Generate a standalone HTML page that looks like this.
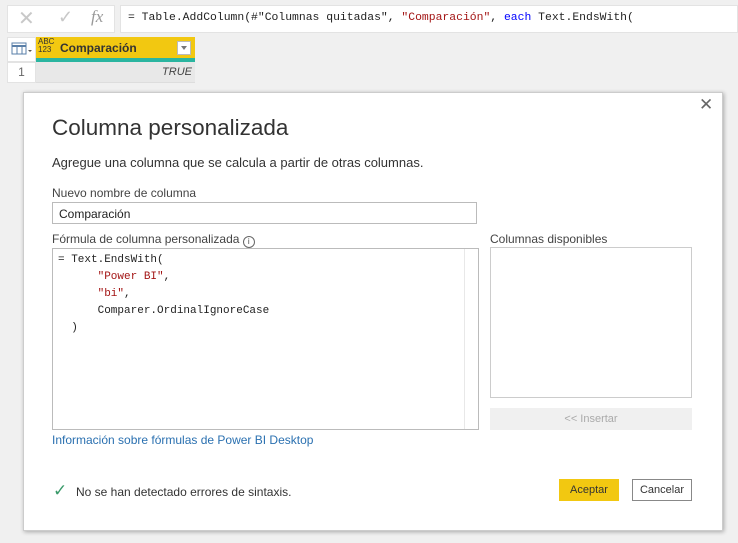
<!DOCTYPE html>
<html><head><meta charset="utf-8"><style>
*{margin:0;padding:0;box-sizing:border-box}
body{width:738px;height:543px;background:#f0f0f0;font-family:"Liberation Sans",sans-serif;position:relative;overflow:hidden;color:#333}
.a{position:absolute}
.mono{font-family:"Liberation Mono",monospace}
</style></head><body>
<div class="a" style="left:7px;top:5px;width:108px;height:28px;background:#fff;border:1px solid #e3e3e3"></div>
<div class="a" style="left:18px;top:6px;font-size:20px;color:#c8c8c8">✕</div>
<div class="a" style="left:58px;top:7px;font-size:18px;color:#c8c8c8">✓</div>
<div class="a" style="left:91px;top:7px;font-size:17px;color:#999;font-family:'Liberation Serif',serif;font-style:italic">fx</div>
<div class="a" style="left:120px;top:5px;width:618px;height:28px;background:#fff;border:1px solid #e3e3e3"></div>
<div class="a mono" style="left:128px;top:12px;font-size:11.4px;color:#222;white-space:pre">= Table.AddColumn(#"Columnas quitadas", <span style="color:#a31515">"Comparación"</span>, <span style="color:#00f">each</span> Text.EndsWith(</div>
<div class="a" style="left:7px;top:37px;width:29px;height:25px;background:#fff;border:1px solid #e3e3e3"></div>
<svg class="a" style="left:11px;top:42px" width="22" height="14"><rect x="1" y="1" width="14" height="11" fill="#fff" stroke="#5a7fa8"/><line x1="1" y1="4" x2="15" y2="4" stroke="#5a7fa8" stroke-width="2"/><line x1="6" y1="4" x2="6" y2="12" stroke="#5a7fa8"/><line x1="11" y1="4" x2="11" y2="12" stroke="#5a7fa8"/><path d="M17 8l2 2 2-2z" fill="#555"/></svg>
<div class="a" style="left:36px;top:37px;width:159px;height:22px;background:#f2c811"></div>
<div class="a" style="left:36px;top:58px;width:159px;height:4px;background:#2bb5a0"></div>
<div class="a" style="left:38px;top:38px;font-size:8px;line-height:8px;color:#333">ABC<br>123</div>
<div class="a" style="left:60px;top:41px;font-size:12px;font-weight:bold;color:#333">Comparación</div>
<div class="a" style="left:177px;top:41px;width:14px;height:14px;background:#fff;border:1px solid #bbb"></div>
<div class="a" style="left:181px;top:46px;border:3px solid transparent;border-top:4px solid #777;width:0;height:0"></div>
<div class="a" style="left:7px;top:62px;width:29px;height:21px;background:#fff;border:1px solid #e3e3e3;font-size:12px;color:#666;text-align:center;line-height:19px">1</div>
<div class="a" style="left:36px;top:62px;width:159px;height:21px;background:#e8e8e8;border-bottom:1px solid #ddd;font-size:11px;font-style:italic;color:#444;text-align:right;padding-right:3px;line-height:20px">TRUE</div>
<div class="a" style="left:23px;top:92px;width:700px;height:439px;background:#fff;border:1px solid #ccc;box-shadow:1px 1px 4px rgba(0,0,0,.3)"></div>
<div class="a" style="left:699px;top:95px;font-size:17px;color:#666">✕</div>
<div class="a" style="left:52px;top:115px;font-size:22.5px;color:#333">Columna personalizada</div>
<div class="a" style="left:52px;top:155px;font-size:13px;color:#333">Agregue una columna que se calcula a partir de otras columnas.</div>
<div class="a" style="left:52px;top:186px;font-size:12px;color:#444">Nuevo nombre de columna</div>
<div class="a" style="left:52px;top:202px;width:425px;height:22px;border:1px solid #bbb;font-size:12px;padding:4px 6px;color:#222">Comparación</div>
<div class="a" style="left:52px;top:232px;font-size:12px;color:#444">Fórmula de columna personalizada <span style="display:inline-block;width:12px;height:12px;border:1px solid #666;border-radius:50%;font-size:8px;text-align:center;line-height:10px;vertical-align:-1px">i</span></div>
<div class="a" style="left:52px;top:248px;width:427px;height:182px;border:1px solid #bbb"></div>
<div class="a" style="left:464px;top:249px;width:14px;height:180px;border-left:1px solid #e8e8e8"></div>
<div class="a mono" style="left:58px;top:252px;font-size:11px;line-height:17px;color:#222;white-space:pre">= Text.EndsWith(
      <span style="color:#a31515">"Power BI"</span>,
      <span style="color:#a31515">"bi"</span>,
      Comparer.OrdinalIgnoreCase
  )</div>
<div class="a" style="left:490px;top:232px;font-size:12px;color:#444">Columnas disponibles</div>
<div class="a" style="left:490px;top:247px;width:202px;height:151px;border:1px solid #ccc"></div>
<div class="a" style="left:490px;top:408px;width:202px;height:22px;background:#f0f0f0;font-size:11px;color:#aaa;text-align:center;line-height:22px">&lt;&lt; Insertar</div>
<div class="a" style="left:52px;top:433px;font-size:12px;color:#2a70b0">Información sobre fórmulas de Power BI Desktop</div>
<div class="a" style="left:53px;top:481px;font-size:17px;color:#3a9a6a">✓</div>
<div class="a" style="left:76px;top:485px;font-size:12px;color:#333">No se han detectado errores de sintaxis.</div>
<div class="a" style="left:559px;top:479px;width:60px;height:22px;background:#f2c811;font-size:11px;text-align:center;line-height:23px;color:#333">Aceptar</div>
<div class="a" style="left:632px;top:479px;width:60px;height:22px;border:1px solid #888;font-size:11px;text-align:center;line-height:21px;color:#333">Cancelar</div>
</body></html>
